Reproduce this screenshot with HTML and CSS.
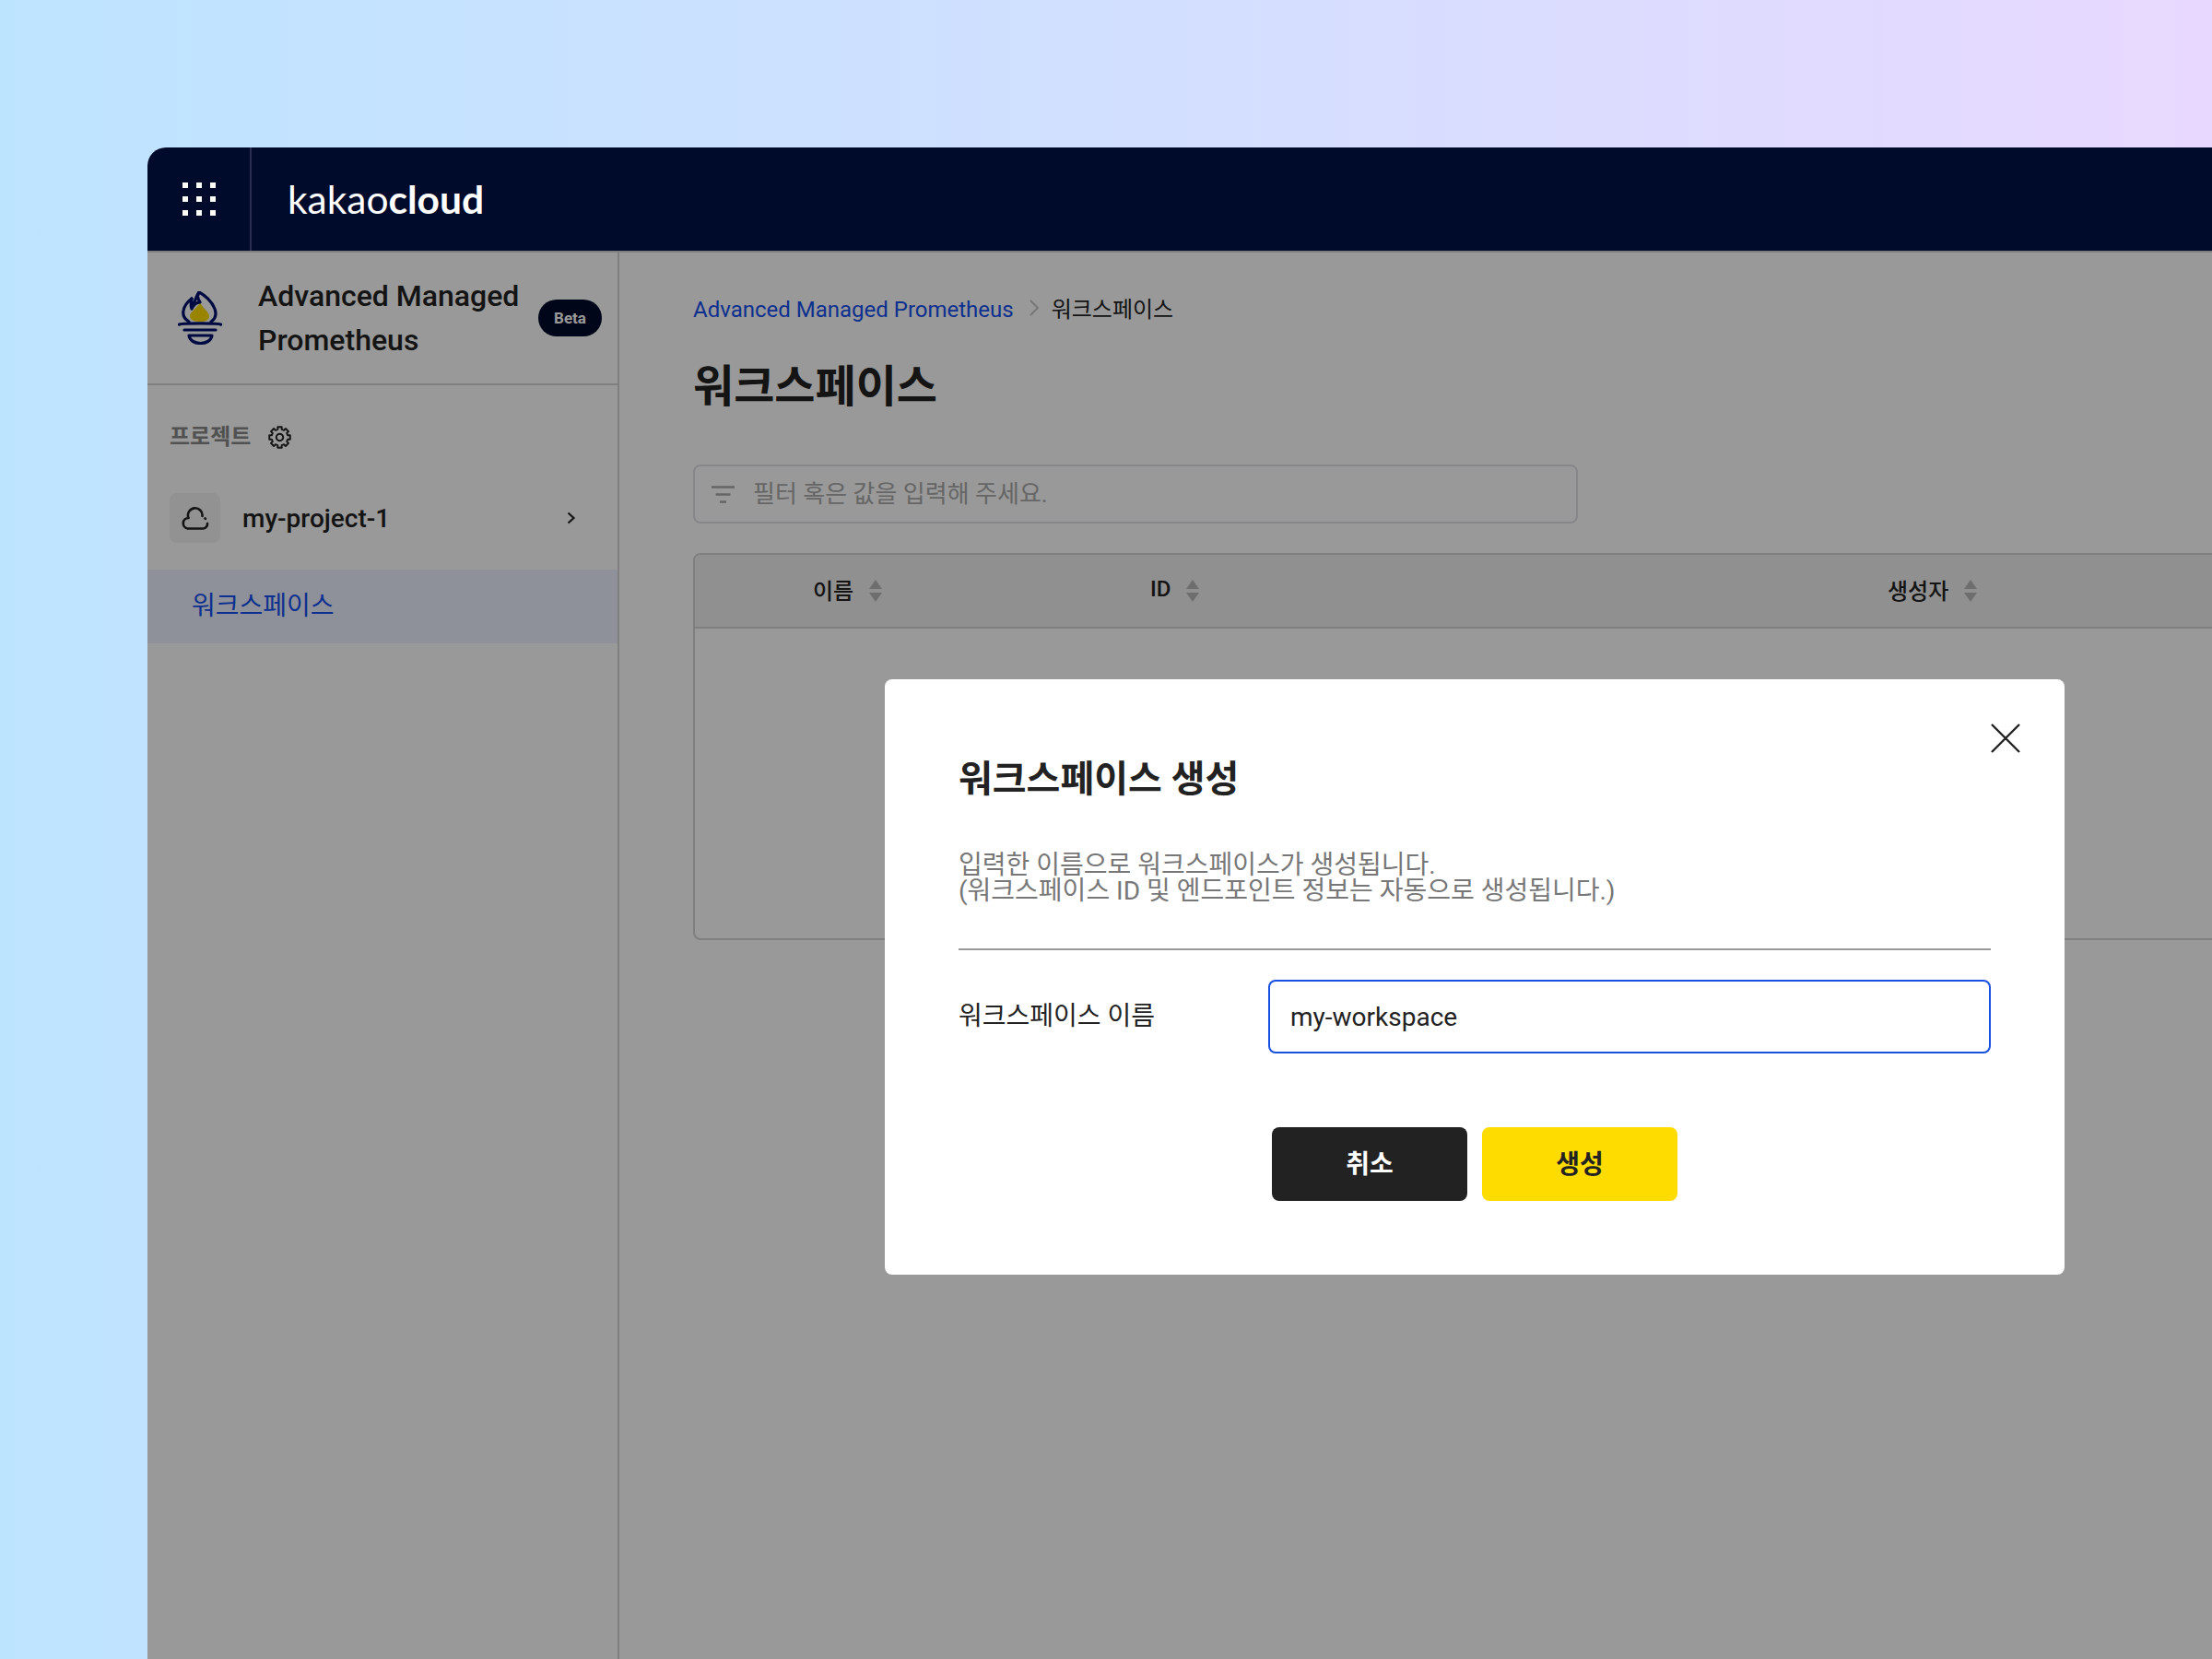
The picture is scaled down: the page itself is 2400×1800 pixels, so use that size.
FILE: index.html
```html
<!DOCTYPE html>
<html lang="ko">
<head>
<meta charset="utf-8">
<title>kakaocloud</title>
<link rel="stylesheet" href="styles.css">
</head>
<body>
<div class="window">
  <header class="topbar">
    <div class="apps">
      <svg width="36" height="36" viewBox="0 0 36 36" fill="#fff">
        <rect x="0" y="0" width="6" height="6"/><rect x="15" y="0" width="6" height="6"/><rect x="30" y="0" width="6" height="6"/>
        <rect x="0" y="15" width="6" height="6"/><rect x="15" y="15" width="6" height="6"/><rect x="30" y="15" width="6" height="6"/>
        <rect x="0" y="30" width="6" height="6"/><rect x="15" y="30" width="6" height="6"/><rect x="30" y="30" width="6" height="6"/>
      </svg>
    </div>
    <div class="logo">kakao<b>cloud</b></div>
  </header>
  <div class="workspace">
    <aside class="sidebar">
      <div class="svc-head">
        <svg class="flame" width="48" height="58" viewBox="0 0 48 58" fill="none" stroke="#00126e" stroke-width="3.200" stroke-linecap="round" stroke-linejoin="round">
          <path d="M24 12C21 19 13 22 13 27C13 31 18 33 24 33C30 33 34 31 34 27C34 22 27 19 24 12Z" fill="#ffdc00" stroke="none"/>
          <path d="M12 33C7 30 5 26 6 21C7 15 11 11 15 8C14 11 15 13 17 14C19 10 20 5 23 1C29 4 37 11 40 19C42 25 41 30 36 33"/>
          <path d="M23 1C21 4 21 8 24 12C20 12 17 15 15 19C14 16 14 12 15 8"/>
          <path d="M1.500 36C3 34.500 45 34.500 46.500 36" stroke-width="3.400"/>
          <path d="M7 42H41"/>
          <path d="M12 48H37C36 54 30 56.500 24.500 56.500C19 56.500 13 54 12 48Z"/>
        </svg>
        <div class="svc-name">Advanced Managed<br>Prometheus</div>
        <span class="badge">Beta</span>
      </div>
      <div class="project-label">
        <span>프로젝트</span>
        <svg width="25" height="25" viewBox="0 0 24 24" fill="none" stroke="#222" stroke-width="1.900" stroke-linejoin="round">
          <g transform="translate(12 12)">
            <polygon points="-2.08,-8.34 -2.1,-10.8 2.1,-10.8 2.08,-8.34 4.43,-7.37 6.15,-9.12 9.12,-6.15 7.37,-4.43 8.34,-2.08 10.8,-2.1 10.8,2.1 8.34,2.08 7.37,4.43 9.12,6.15 6.15,9.12 4.43,7.37 2.08,8.34 2.1,10.8 -2.1,10.8 -2.08,8.34 -4.43,7.37 -6.15,9.12 -9.12,6.15 -7.37,4.43 -8.34,2.08 -10.8,2.1 -10.8,-2.1 -8.34,-2.08 -7.37,-4.43 -9.12,-6.15 -6.15,-9.12 -4.43,-7.37"/>
            <circle r="3.600"/>
          </g>
        </svg>
      </div>
      <div class="project">
        <span class="project-icon">
          <svg width="30" height="25" viewBox="0 -1 30 25" fill="none" stroke="#222" stroke-width="2.600" stroke-linecap="round" stroke-linejoin="round">
            <path d="M22.500 9A7.800 7.800 0 1 0 7.500 11A5.800 5.800 0 0 0 6.500 22.500H23A5 5 0 0 0 28 17"/>
            <path d="M25.500 11.500l.4.4"/>
          </svg>
        </span>
        <span class="project-name">my-project-1</span>
        <svg class="chev" width="10" height="14" viewBox="0 0 10 14" fill="none" stroke="#222" stroke-width="2.200"><path d="M1.500 1.500L7.500 7L1.500 12.500"/></svg>
      </div>
      <div class="nav-item">워크스페이스</div>
    </aside>
    <main class="main">
      <nav class="crumbs">
        <a>Advanced Managed Prometheus</a>
        <svg class="crumb-sep" width="10" height="18" viewBox="0 0 10 18" fill="none" stroke="#c4c4c4" stroke-width="1.800"><path d="M1 1L9 9L1 17"/></svg>
        <span>워크스페이스</span>
      </nav>
      <h1 class="page-title">워크스페이스</h1>
      <div class="filter">
        <svg width="25" height="19" viewBox="0 0 25 19" fill="none" stroke="#aaa" stroke-width="2.400"><path d="M0 1.500H25M4.500 9.500H20.500M9 17.500H16"/></svg>
        <span>필터 혹은 값을 입력해 주세요.</span>
      </div>
      <section class="table">
        <div class="thead">
          <div class="th"><span>이름</span><svg class="sort" width="14" height="24" viewBox="0 0 14 24" fill="#b8b8b8"><path d="M7 0L14 10H0ZM7 24L0 14H14Z"/></svg></div>
          <div class="th"><span>ID</span><svg class="sort" width="14" height="24" viewBox="0 0 14 24" fill="#b8b8b8"><path d="M7 0L14 10H0ZM7 24L0 14H14Z"/></svg></div>
          <div class="th"><span>생성자</span><svg class="sort" width="14" height="24" viewBox="0 0 14 24" fill="#b8b8b8"><path d="M7 0L14 10H0ZM7 24L0 14H14Z"/></svg></div>
        </div>
      </section>
    </main>
    <div class="overlay">
      <div class="modal">
        <svg class="close" width="32" height="32" viewBox="0 0 32 32" fill="none" stroke="#222" stroke-width="2.400"><path d="M1 1L31 31M31 1L1 31"/></svg>
        <h2 class="modal-title">워크스페이스 생성</h2>
        <p class="modal-desc">입력한 이름으로 워크스페이스가 생성됩니다.<br>(워크스페이스 ID 및 엔드포인트 정보는 자동으로 생성됩니다.)</p>
        <div class="field">
          <label class="field-label" for="ws-name">워크스페이스 이름</label>
          <input class="field-input" id="ws-name" type="text" value="my-workspace">
        </div>
        <div class="actions">
          <button class="btn btn-dark" type="button">취소</button>
          <button class="btn btn-yellow" type="button">생성</button>
        </div>
      </div>
    </div>
  </div>
</div>
</body>
</html>
```

FILE: styles.css
```css
* { box-sizing: border-box; }
html, body { margin: 0; height: 1800px; overflow: hidden; }
body {
  padding: 160px 0 0 160px;
  background: linear-gradient(90deg, #bde4ff 0%, #cfe0ff 45%, #e8d8ff 100%);
  font-family: Roboto, "Noto Sans CJK KR", sans-serif;
  color: #222;
}
.window {
  width: 2240px;
  height: 1640px;
  display: flex;
  flex-direction: column;
  background: #fff;
  border-radius: 20px 0 0 0;
  overflow: hidden;
}
.topbar {
  flex: 0 0 112px;
  display: flex;
  align-items: center;
  background: #000a2b;
}
.apps {
  width: 113px;
  height: 100%;
  display: flex;
  align-items: center;
  padding-left: 38px;
  border-right: 2px solid #2a3150;
}
.apps svg { display: block; }
.logo {
  margin-left: 39px;
  font-family: Lato, sans-serif;
  font-size: 42.500px;
  line-height: 60px;
  color: #fff;
}
.logo b { font-weight: 700; }

.workspace { flex: 1; display: flex; position: relative; min-height: 0; }
.sidebar {
  flex: 0 0 512px;
  border-top: 2px solid #d4d4d4;
  border-right: 2px solid #d4d4d4;
}
.svc-head {
  height: 144px;
  display: flex;
  align-items: center;
  padding-left: 33px;
  border-bottom: 2px solid #d4d4d4;
}
.flame { flex: none; margin-right: 39px; }
.svc-name {
  flex: 0 0 304px;
  font-size: 32px;
  font-weight: 500;
  line-height: 48px;
}
.badge {
  width: 69px;
  height: 40px;
  border-radius: 20px;
  background: #000a2b;
  color: #fff;
  font-size: 17px;
  font-weight: 700;
  line-height: 40px;
  text-align: center;
}
.project-label {
  display: flex;
  align-items: center;
  gap: 19px;
  margin-top: 38px;
  padding-left: 24px;
  font-size: 24px;
  font-weight: 700;
  line-height: 36px;
  color: #888;
}
.project {
  display: flex;
  align-items: center;
  height: 54px;
  margin-top: 43px;
  padding: 0 45px 0 24px;
}
.project-icon {
  width: 55px;
  height: 54px;
  display: flex;
  align-items: center;
  justify-content: center;
  background: #f4f4f4;
  border-radius: 8px;
}
.project-name { margin-left: 24px; font-size: 28px; font-weight: 500; }
.chev { margin-left: auto; }
.nav-item {
  height: 80px;
  margin-top: 29px;
  padding-left: 48px;
  background: #edf2ff;
  color: #1550f0;
  font-size: 28px;
  line-height: 80px;
}

.main { flex: 1; min-width: 0; padding: 43px 0 0 80px; border-top: 2px solid #d4d4d4; overflow: hidden; }
.crumbs {
  display: flex;
  align-items: center;
  gap: 14px;
  height: 34px;
  font-size: 24px;
}
.crumbs a { margin-top: 3px; color: #1550f0; }
.crumbs span { margin-bottom: 2px; }
.crumb-sep { margin-left: 3px; }
.page-title {
  margin: 37px 0 0;
  font-size: 48px;
  font-weight: 700;
  line-height: 64px;
}
.filter {
  display: flex;
  align-items: center;
  gap: 20px;
  width: 960px;
  height: 64px;
  margin-top: 52px;
  padding: 0 0 5px 18px;
  border: 2px solid #dfdfe8;
  border-radius: 8px;
  color: #aaa;
  font-size: 26px;
}
.filter svg { margin-top: 5px; }
.table {
  width: 1720px;
  height: 420px;
  margin-top: 32px;
  border: 2px solid #d4d4d4;
  border-radius: 8px;
  overflow: hidden;
}
.thead {
  display: grid;
  grid-template-columns: 366px 800px 1fr;
  height: 80px;
  padding-left: 128px;
  background: #f0f0f0;
  border-bottom: 2px solid #d4d4d4;
}
.th {
  display: flex;
  align-items: center;
  gap: 17px;
  font-size: 24px;
  font-weight: 500;
}
.th span { margin-top: -4px; }

.overlay {
  position: absolute;
  inset: 0;
  padding: 465px 0 0 800px;
  background: rgba(0, 0, 0, 0.4);
}
.modal {
  position: relative;
  width: 1280px;
  padding: 81px 80px 80px 80px;
  background: #fff;
  border-radius: 8px;
}
.close { position: absolute; top: 48px; right: 48px; }
.modal-title {
  margin: 0;
  font-size: 40px;
  font-weight: 700;
  line-height: 56px;
}
.modal-desc {
  margin: 51px 0 0;
  padding-bottom: 48px;
  border-bottom: 2px solid #999;
  color: #777;
  font-size: 28px;
  line-height: 28px;
}
.field { display: flex; align-items: center; margin-top: 32px; }
.field-label { flex: 0 0 336px; padding-bottom: 6px; font-size: 28px; }
.field-input {
  flex: 1;
  min-width: 0;
  height: 80px;
  padding: 0 22px;
  border: 2px solid #1a50e0;
  border-radius: 8px;
  outline: none;
  color: #222;
  font-family: inherit;
  font-size: 28px;
}
.actions { display: flex; justify-content: center; gap: 16px; margin-top: 80px; }
.btn {
  width: 212px;
  height: 80px;
  padding: 0 0 4px;
  border: 0;
  border-radius: 8px;
  font-family: inherit;
  font-size: 28px;
  font-weight: 700;
}
.btn-dark { background: #222; color: #fff; }
.btn-yellow { background: #ffdc00; color: #222; }
```
